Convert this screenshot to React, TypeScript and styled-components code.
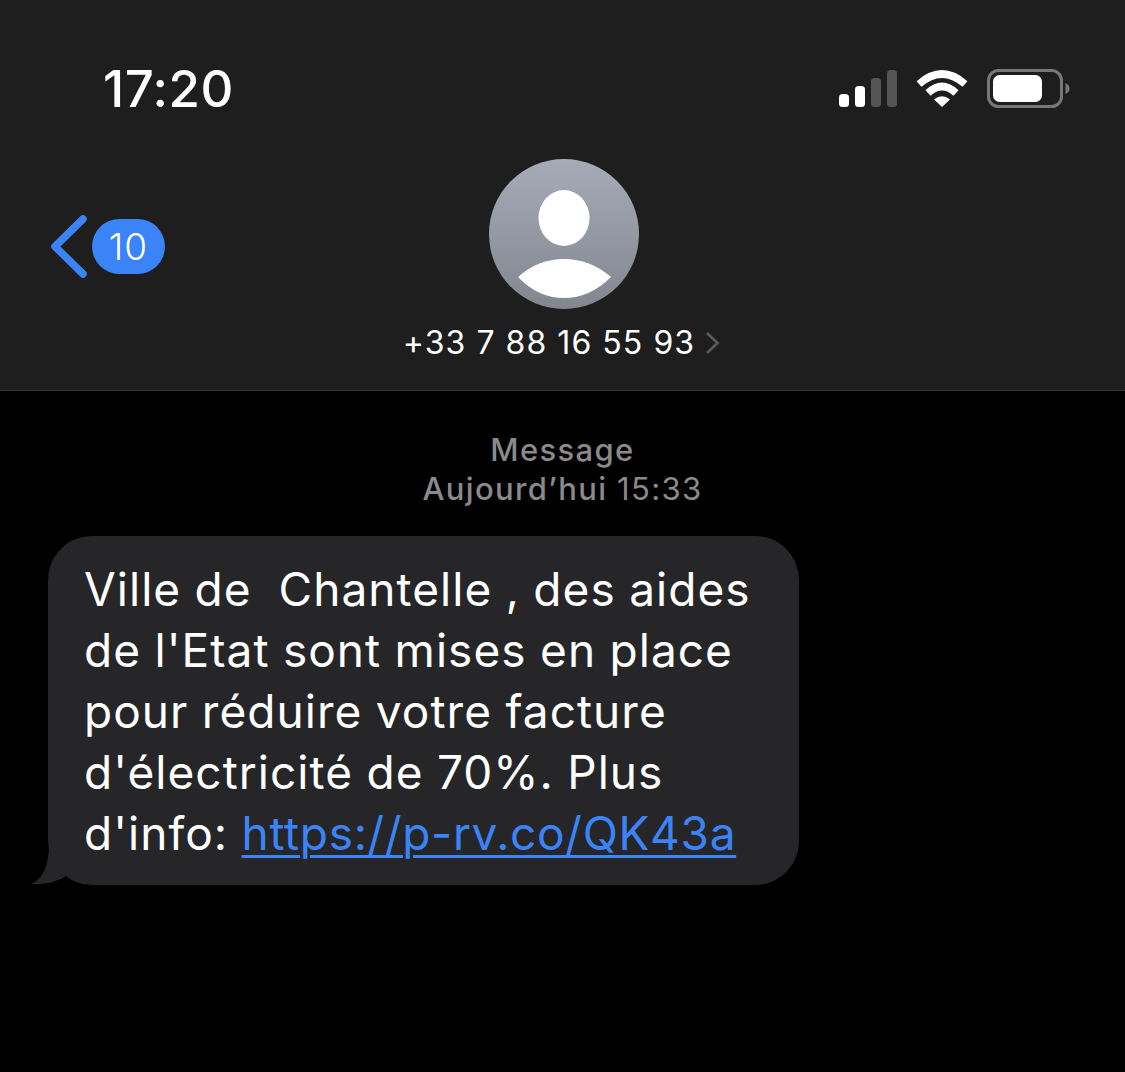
import React from "react";
import styled, { createGlobalStyle } from "styled-components";

const Global = createGlobalStyle`
  html, body { margin: 0; padding: 0; background: #000; }
  body { font-family: Inter, "Liberation Sans", sans-serif; -webkit-font-smoothing: antialiased; }
`;

const Page = styled.div`
  width: 1125px;
  height: 1072px;
  background: #000;
  overflow: hidden;
`;

const Header = styled.header`
  height: 391px;
  box-sizing: border-box;
  background: #1e1e1e;
  border-bottom: 1px solid #333333;
  display: flex;
  flex-direction: column;
`;

const StatusBar = styled.div`
  height: 159px;
  box-sizing: border-box;
  padding: 58px 55px 0 103px;
  display: flex;
  justify-content: space-between;
  align-items: flex-start;
`;

const Time = styled.div`
  color: #fff;
  font-size: 51px;
  font-weight: 500;
  line-height: 62px;
  letter-spacing: 0.5px;
`;

const StatusIcons = styled.div`
  display: flex;
  align-items: center;
  gap: 19px;
  padding-top: 11px;
`;

const NavRow = styled.div`
  display: grid;
  grid-template-columns: 1fr auto 1fr;
  align-items: start;
`;

const BackLink = styled.div`
  display: flex;
  align-items: center;
  gap: 4px;
  padding: 55px 0 0 50px;
`;

const Badge = styled.div`
  width: 73px;
  height: 55px;
  border-radius: 28px;
  background: #3a84f7;
  color: #fff;
  font-size: 37px;
  font-weight: 300;
  letter-spacing: 1px;
  display: flex;
  align-items: center;
  justify-content: center;
`;

const Contact = styled.div`
  display: flex;
  flex-direction: column;
  align-items: center;
`;

const AvatarFrame = styled.div`
  display: flex;
  margin-left: 2px;
`;

const ContactName = styled.div`
  display: flex;
  align-items: center;
  gap: 10px;
  margin-top: 14px;
  margin-right: 2px;
  color: #fff;
  font-size: 32px;
  line-height: 40px;
  font-weight: 400;
  letter-spacing: 1.05px;
`;

const Thread = styled.main`
  padding: 40px 0 0 48px;
`;

const Meta = styled.div`
  width: 1029px;
  text-align: center;
  color: #8a8a8d;
  font-size: 31px;
  line-height: 38.5px;
  font-weight: 500;
  letter-spacing: 1.35px;
`;

const MetaTime = styled.span`
  font-weight: 400;
`;

const Bubble = styled.div`
  position: relative;
  width: 751px;
  height: 349px;
  box-sizing: border-box;
  margin-top: 28px;
  padding: 23px 20px 0 36px;
  border-radius: 44px;
  background: #262628;
  color: #fff;
  font-size: 46px;
  line-height: 61px;
  font-weight: 400;
  letter-spacing: 1.05px;
  word-spacing: -0.6px;
  white-space: pre-wrap;
`;

const BubbleLine = styled.div`
  height: 61px;
`;

const Tail = styled.svg`
  position: absolute;
  left: -17px;
  bottom: 0;
`;

const BubbleLink = styled.a`
  color: #3a84f7;
  letter-spacing: 0.7px;
  text-decoration: underline;
  text-decoration-thickness: 3px;
  text-underline-offset: 5px;
`;

const Signal = () => (
  <svg width="59" height="38" viewBox="0 0 59 38">
    <rect x="1" y="24" width="10" height="13" rx="3.5" fill="#fff" />
    <rect x="17" y="16" width="10" height="21" rx="3.5" fill="#fff" />
    <rect x="33" y="8" width="10" height="29" rx="3.5" fill="#555" />
    <rect x="49" y="0" width="10" height="37" rx="3.5" fill="#555" />
  </svg>
);

const Wifi = () => (
  <svg width="52" height="38" viewBox="0 0 52 38">
    <path d="M3 14 Q26 -6 49 14" fill="none" stroke="#fff" strokeWidth="7.5" strokeLinecap="butt" />
    <path d="M12 23 Q26 10 40 23" fill="none" stroke="#fff" strokeWidth="7.5" strokeLinecap="butt" />
    <path d="M26 37 L18 29.5 Q26 23 34 29.5 Z" fill="#fff" />
  </svg>
);

const Battery = () => (
  <svg width="83" height="39" viewBox="0 0 83 39">
    <rect x="1.5" y="1.5" width="73" height="36" rx="10" fill="none" stroke="#777" strokeWidth="3" />
    <rect x="6" y="6" width="49" height="27" rx="6.5" fill="#fff" />
    <path d="M78.5 14 Q82.5 16 82.5 19.5 Q82.5 23 78.5 25 Z" fill="#777" />
  </svg>
);

const BackChevron = () => (
  <svg width="38" height="64" viewBox="0 0 38 64">
    <path d="M33 5 L5 32.5 L33 60" fill="none" stroke="#3a84f7" strokeWidth="7.5" strokeLinecap="round" strokeLinejoin="round" />
  </svg>
);

const Avatar = () => (
  <svg width="150" height="150" viewBox="0 0 150 150">
    <defs>
      <linearGradient id="avatarFill" x1="0" y1="0" x2="0" y2="1">
        <stop offset="0" stopColor="#a7abb8" />
        <stop offset="1" stopColor="#83868f" />
      </linearGradient>
    </defs>
    <circle cx="75" cy="75" r="75" fill="url(#avatarFill)" />
    <ellipse cx="75" cy="59" rx="25.5" ry="28" fill="#fff" />
    <path d="M29 118 Q49 100 75 100 Q101 100 122 118 Q101 139 75 139 Q49 139 29 118 Z" fill="#fff" />
  </svg>
);

const ContactChevron = () => (
  <svg width="15" height="24" viewBox="0 0 15 24">
    <path d="M2 2 L12.5 12 L2 22" fill="none" stroke="#5a5a5a" strokeWidth="2.6" />
  </svg>
);

export default function App() {
  return (
    <Page>
      <Global />
      <Header>
        <StatusBar>
          <Time>17:20</Time>
          <StatusIcons>
            <Signal />
            <Wifi />
            <Battery />
          </StatusIcons>
        </StatusBar>
        <NavRow>
          <BackLink>
            <BackChevron />
            <Badge>10</Badge>
          </BackLink>
          <Contact>
            <AvatarFrame>
              <Avatar />
            </AvatarFrame>
            <ContactName>
              <span>+33 7 88 16 55 93</span>
              <ContactChevron />
            </ContactName>
          </Contact>
          <div />
        </NavRow>
      </Header>
      <Thread>
        <Meta>
          Message
          <br />
          Aujourd’hui <MetaTime>15:33</MetaTime>
        </Meta>
        <Bubble>
          <BubbleLine>{"Ville de  Chantelle , des aides"}</BubbleLine>
          <BubbleLine>de l'Etat sont mises en place</BubbleLine>
          <BubbleLine>pour réduire votre facture</BubbleLine>
          <BubbleLine>d'électricité de 70%. Plus</BubbleLine>
          <BubbleLine>
            {"d'info: "}
            <BubbleLink href="#">https://p-rv.co/QK43a</BubbleLink>
          </BubbleLine>
          <Tail width="40" height="40" viewBox="0 0 40 40">
            <path d="M18 0 C18 20 12 34 0 39 C14 40 27 37 36 30 L40 32 L40 0 Z" fill="#262628" />
          </Tail>
        </Bubble>
      </Thread>
    </Page>
  );
}
